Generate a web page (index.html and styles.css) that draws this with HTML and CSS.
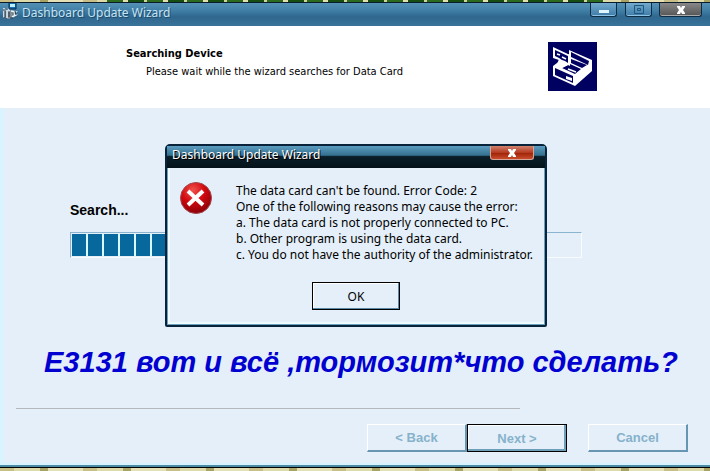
FILE: index.html
```
<!DOCTYPE html>
<html lang="en">
<head>
    <meta charset="UTF-8">
    <meta name="viewport" content="width=device-width, initial-scale=1.0">
    <title>Dashboard Update Wizard</title>
    <link rel="stylesheet" href="styles.css">
</head>
<body>
    <div class="wizard">
        <div class="titlebar">
            <svg class="app-icon" width="18" height="17" viewBox="0 0 18 17">
                <path d="M1 6h3v9H1zM5 4h4v4h5l-1 5-4 3H5z" fill="#7c8b96"/>
                <path d="M2 5v1M2 8v6M5 7v8M7 5v3M9 8l5 1-3 2 3 1-4 2" stroke="#e8f2f7" stroke-width="1.500" fill="none"/>
                <path d="M3 8v7M7 9v5M11 10v2M8 15h3M13 8l1 4" stroke="#25323c" fill="none"/>
                <path d="M7 0h7v6H7z" fill="#1b6fb5"/>
                <path d="M8 1h5v3H8z" fill="#b8f2ff"/>
                <path d="M7 0v6h7V0" stroke="#092b4d" fill="none"/>
            </svg>
            <span class="titlebar-text">Dashboard Update Wizard</span>
            <div class="window-buttons">
                <button class="window-button" aria-label="Minimize">
                    <svg width="12" height="12" viewBox="0 0 12 12"><rect x="1" y="6" width="10" height="3" fill="#dff6ff"/></svg>
                </button>
                <button class="window-button" aria-label="Maximize" disabled>
                    <svg width="12" height="12" viewBox="0 0 12 12"><path d="M1.500 1.500h9v8h-9zM4.500 4.500h3v2h-3z" fill="none" stroke="#1f577f"/></svg>
                </button>
                <button class="window-button window-close" aria-label="Close">
                    <svg width="12" height="12" viewBox="0 0 12 12"><path d="M2 2h3l1 2 1-2h3v1L8 6l2 3v1H7L6 8l-1 2H2V9l2-3-2-3z" fill="#fff"/></svg>
                </button>
            </div>
        </div>

        <header class="header">
            <div>
                <h1>Searching Device</h1>
                <p>Please wait while the wizard searches for Data Card</p>
            </div>
            <svg class="device-icon" width="49" height="49" viewBox="0 0 49 49">
                <rect width="49" height="49" fill="#000061"/>
                <path d="M21 8l23 10v11L27 44 5 34V24l8-6 8-6z" fill="#fff"/>
                <path d="M23 10l18 9-1 4-17-8z" fill="#000061"/>
                <path d="M23 17v4l11 5 5-3z" fill="#000061"/>
                <path d="M22 22l11 5-6 5-13-6z" fill="#000061"/>
                <path d="M20 27l8 3" stroke="#fff" stroke-width="1.500"/>
                <path d="M7 26l18 8v7L7 33z" fill="#000061"/>
                <path d="M18 34l6 2v3l-6-2z" fill="#fff"/>
                <path d="M5 5l17 8v11l-4-2-2-1-5-3-6-2z" fill="#fff"/>
                <path d="M7 8l13 6v7l-3-2-3-1-3-2-4-2z" fill="#000061"/>
                <path d="M9 12l3 1M14 15l4 2" stroke="#fff" stroke-width="1.500"/>
                <path d="M11 17l7 4 2 2-6 3-6-1z" fill="#fff"/>
            </svg>
        </header>

        <main class="content">
            <h2 id="searchLabel">Search...</h2>
            <div class="progress" role="progressbar" aria-labelledby="searchLabel">
                <div class="progress-fill"></div>
            </div>
            <p class="caption">E3131 вот и всё ,тормозит*что сделать?</p>
        </main>

        <footer class="footer">
            <hr>
            <div class="actions">
                <button class="button" disabled>&lt; Back</button>
                <button class="button button-default" disabled>Next &gt;</button>
                <button class="button button-cancel" disabled>Cancel</button>
            </div>
        </footer>
    </div>

    <div class="dialog" role="alertdialog" aria-labelledby="dialogTitle" aria-describedby="dialogText">
        <div class="dialog-titlebar">
            <span id="dialogTitle">Dashboard Update Wizard</span>
            <button class="dialog-close" aria-label="Close">
                <svg width="12" height="12" viewBox="0 0 12 12"><path d="M2 2h3l1 2 1-2h3v1L8 6l2 3v1H7L6 8l-1 2H2V9l2-3-2-3z" fill="#fff"/></svg>
            </button>
        </div>
        <div class="dialog-body">
            <svg class="error-icon" width="32" height="33" viewBox="0 0 32 33">
                <defs>
                    <radialGradient id="red" cx="40%" cy="25%" r="75%">
                        <stop offset="0" stop-color="#f0524c"/>
                        <stop offset="0.5" stop-color="#d10a10"/>
                        <stop offset="1" stop-color="#8e0008"/>
                    </radialGradient>
                </defs>
                <circle cx="16" cy="16" r="15.500" fill="url(#red)" stroke="#a34a50"/>
                <path d="M8 9l15 14M23 9L8 23" stroke="#fff" stroke-width="4"/>
            </svg>
            <div class="dialog-text" id="dialogText">
                <p>The data card can't be found. Error Code: 2</p>
                <p>One of the following reasons may cause the error:</p>
                <p>a. The data card is not properly connected to PC.</p>
                <p>b. Other program is using the data card.</p>
                <p>c. You do not have the authority of the administrator.</p>
            </div>
        </div>
        <button class="ok-button">OK</button>
    </div>
</body>
</html>
```
FILE: styles.css
```
* {
    box-sizing: border-box;
}
body {
    font-family: "Noto Sans", Tahoma, sans-serif;
    font-size: 12px;
    margin: 0;
    padding: 2px 0 3px;
    min-height: 100vh;
    display: flex;
    flex-direction: column;
    color: #000;
    background: repeating-linear-gradient(90deg, #c9bf86 0 14px, #ded9a8 14px 40px, #a8a263 40px 48px, #e4dfb4 48px 83px);
    position: relative;
}
/* strip of wallpaper above the window */
body::before {
    content: "";
    position: absolute;
    top: 0;
    left: 15%;
    width: 70%;
    height: 2px;
    background: repeating-linear-gradient(90deg, #2c6b1d 0 16px, #e5dfb0 16px 21px, #164d10 21px 37px, #cfd59a 37px 40px);
}
h1, h2, p {
    margin: 0;
}
button {
    font-family: inherit;
    padding: 0;
}
.wizard {
    flex: 1;
    display: flex;
    flex-direction: column;
    background-color: #e4eff9;
    border-top: 1px solid #0a1c2b;
    border-bottom: 1px solid #000;
    box-shadow: inset 0 -2px #4d8ba5, inset 0 -4px #d5f4ff, inset 4px 0 #d9f3ff;
}
.titlebar {
    display: flex;
    height: 23px;
    color: #c5e4f4;
    background: linear-gradient(#5591b6, #3f7da5 35%, #2f678e 60%, #3a739a);
}
.app-icon {
    margin-left: 2px;
}
.titlebar-text {
    flex: 1;
    padding-left: 2px;
    line-height: 20px;
    text-shadow: 1px 1px #1d4b6c;
}
.window-buttons {
    display: flex;
    gap: 8px;
    padding-right: 8px;
}
.window-button {
    display: flex;
    align-items: center;
    justify-content: center;
    width: 27px;
    height: 14px;
    border: 1px solid #0d2d44;
    border-top: none;
    border-radius: 0 0 3px 3px;
    background: linear-gradient(#73aace, #3d7ba7);
    box-shadow: inset 0 -1px #8fc4e4;
}
.window-close {
    width: 43px;
    margin-left: -1px;
    background: linear-gradient(#888, #555);
    box-shadow: inset 0 -1px #aaa;
}
.header {
    display: flex;
    justify-content: space-between;
    height: 82px;
    padding: 16px 113px 0 126px;
    font-family: "DejaVu Sans Condensed", Tahoma, sans-serif;
    background-color: #fff;
}
.header h1 {
    font-size: 11px;
    line-height: 18px;
    padding-top: 3px;
}
.header p {
    font-size: 11px;
    line-height: 18px;
    padding-left: 20px;
}
.content {
    flex: 1;
    padding: 93px 24px 0 70px;
}
.content h2 {
    font-family: "Liberation Sans", Arial, sans-serif;
    font-size: 14px;
    line-height: 18px;
}
.progress {
    height: 26px;
    margin: 13px 104px 0 0;
    padding: 1px;
    border: 1px solid #f8fcff;
    border-top-color: #8ab3d0;
    border-left-color: #8ab3d0;
}
.progress-fill {
    width: 40%;
    height: 22px;
    background: repeating-linear-gradient(90deg, #06689d 0 14px, #d8f7ff 14px 16px);
}
.caption {
    margin: 86px 0 0 -26px;
    font-family: "Liberation Sans", Arial, sans-serif;
    font-size: 29px;
    font-weight: bold;
    font-style: italic;
    line-height: 36px;
    white-space: nowrap;
    color: #0000d0;
}
.footer {
    padding: 0 22px 15px 16px;
}
.footer hr {
    margin: 0 168px 15px 0;
    border: none;
    border-top: 1px solid #b4b8bd;
}
.actions {
    display: flex;
    justify-content: flex-end;
}
.button {
    width: 100px;
    height: 28px;
    font-family: "Liberation Sans", Arial, sans-serif;
    font-size: 13px;
    font-weight: bold;
    color: #86b2cb;
    background-color: #e4eff9;
    border: 1px solid #fff;
    border-right: 2px solid #6796b2;
    border-bottom: 2px solid #6796b2;
}
.button-default {
    border: 1px solid #000;
    box-shadow: inset -2px -2px #6f9eb9, inset 1px 1px #fff;
}
.button-cancel {
    margin-left: 21px;
}
.dialog {
    position: absolute;
    top: 144px;
    left: 165px;
    width: 382px;
    padding-bottom: 15px;
    background-color: #e4eff9;
    border: 2px solid #09243a;
    border-radius: 5px 5px 2px 2px;
    box-shadow: inset 1px 0 #69a0bd, inset -1px -1px #69a0bd, inset 3px -3px #f0fbff;
}
.dialog-titlebar {
    display: flex;
    justify-content: space-between;
    height: 22px;
    padding: 0 11px 0 5px;
    line-height: 18px;
    color: #fff;
    text-shadow: 1px 1px #000;
    background: linear-gradient(#5b9cc0, #35708f 42%, #0a1e29 48%, #04121a);
}
.dialog-close {
    display: flex;
    align-items: center;
    justify-content: center;
    width: 44px;
    height: 14px;
    border: 1px solid #d7a49a;
    border-top: none;
    border-radius: 0 0 3px 3px;
    background: linear-gradient(#d0826f, #b43a20 50%, #a02409 55%, #c84d2d);
}
.dialog-body {
    display: flex;
    gap: 24px;
    padding: 14px 0 0 13px;
}
.dialog-text {
    padding-top: 1px;
    line-height: 16px;
    white-space: nowrap;
}
.ok-button {
    display: block;
    width: 88px;
    height: 28px;
    margin: 19px auto 0;
    font-size: 12px;
    color: #000;
    background-color: #e4eff9;
    border: 1px solid #000;
    box-shadow: inset -1px -1px #5b8aa8, inset 1px 1px #fff;
}
```
